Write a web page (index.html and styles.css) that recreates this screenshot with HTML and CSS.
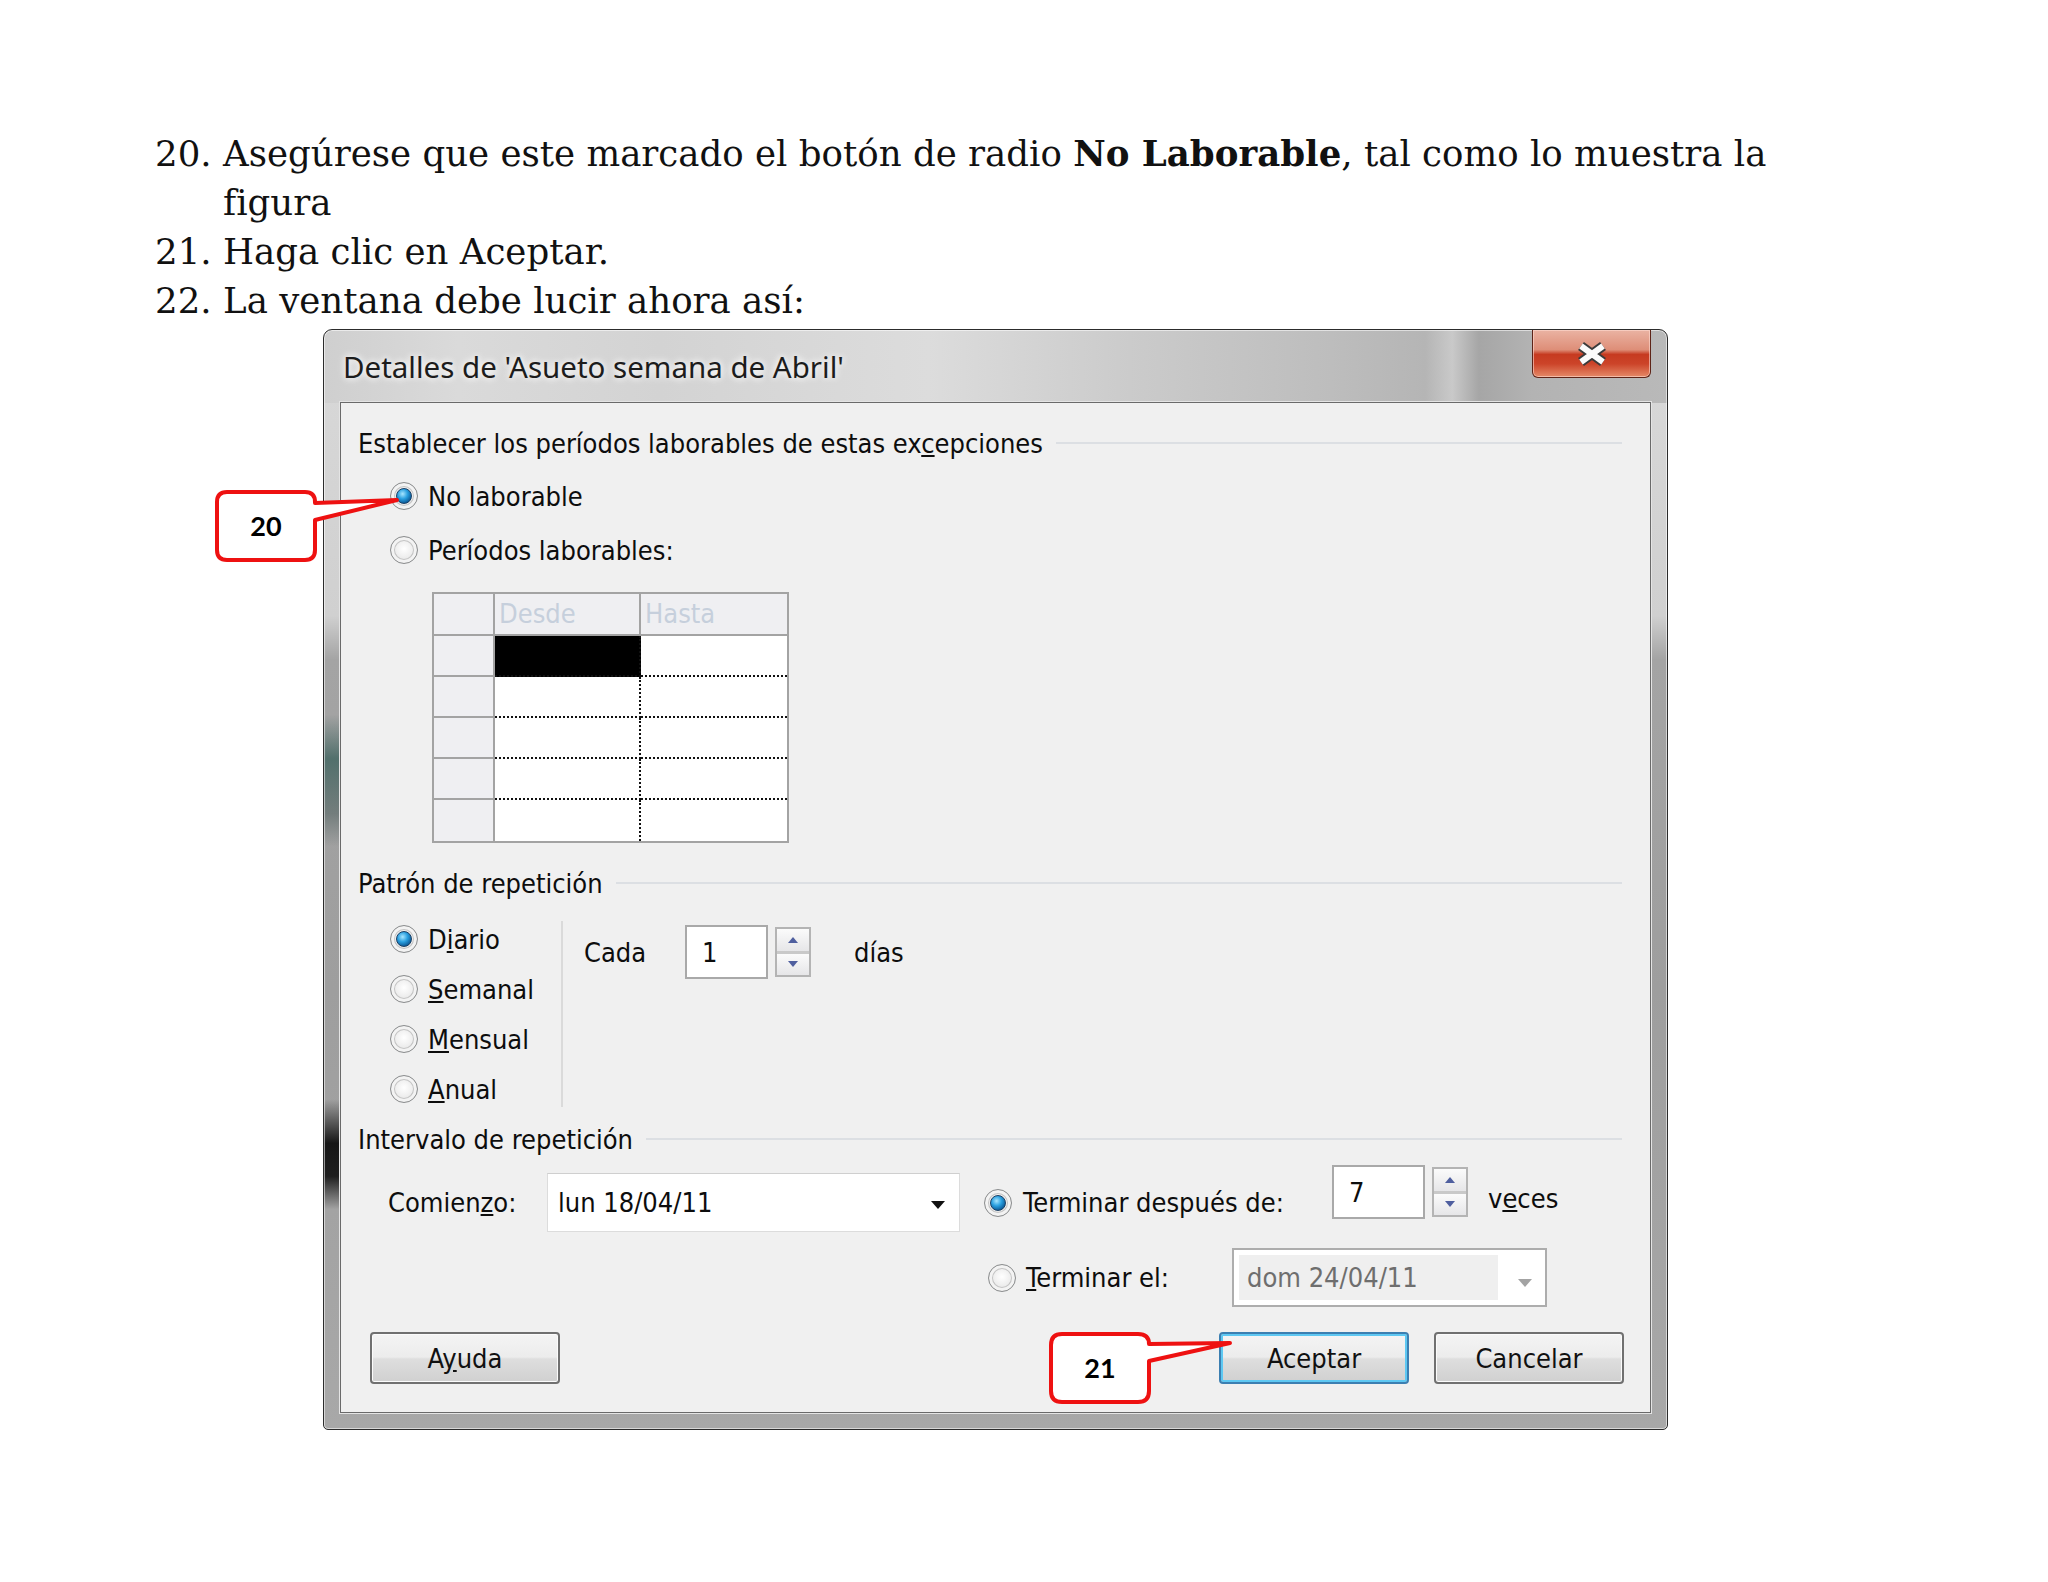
FILE: index.html
```html
<!DOCTYPE html>
<html lang="es">
<head>
    <meta charset="UTF-8">
    <title>Detalles de excepción</title>
    <link rel="stylesheet" href="styles.css">
</head>
<body>

<div class="page">
    <!-- pasos del instructivo -->
    <ol class="steps">
        <li><span class="num">20.</span><span class="txt">Asegúrese que este marcado el botón de radio <b>No Laborable</b>, tal como lo muestra la<br>figura</span></li>
        <li><span class="num">21.</span><span class="txt">Haga clic en Aceptar.</span></li>
        <li><span class="num">22.</span><span class="txt">La ventana debe lucir ahora así:</span></li>
    </ol>

    <!-- ventana de detalles -->
    <div class="window">
        <div class="titlebar">
            <span class="title">Detalles de 'Asueto semana de Abril'</span>
            <span class="close">
                <svg width="36" height="28" viewBox="-18 -14 36 28">
                    <path d="M-11 -8 L11 8 M-11 8 L11 -8" stroke="#3b3b3b" stroke-width="10" fill="none"/>
                    <path d="M-11 -8 L11 8 M-11 8 L11 -8" stroke="#fbfbfb" stroke-width="6" fill="none"/>
                </svg>
            </span>
        </div>

        <div class="client">
            <div class="group-title"><span>Establecer los períodos laborables de estas ex<u>c</u>epciones</span></div>
            <div class="radio-list">
                <label class="opt"><span class="radio on"></span><span>No laborable</span></label>
                <label class="opt"><span class="radio"></span><span>Períodos laborables:</span></label>
            </div>

            <div class="periods">
                <div class="hd corner"></div>
                <div class="hd">Desde</div>
                <div class="hd last">Hasta</div>

                <div class="rh"></div><div class="cell sel"></div><div class="cell last"></div>
                <div class="rh"></div><div class="cell"></div><div class="cell last"></div>
                <div class="rh"></div><div class="cell"></div><div class="cell last"></div>
                <div class="rh"></div><div class="cell"></div><div class="cell last"></div>
                <div class="rh end"></div><div class="cell end"></div><div class="cell last end"></div>
            </div>

            <div class="group-title pattern-title"><span>Patrón de repetición</span></div>
            <div class="pattern">
                <div class="pattern-kinds">
                    <label class="opt"><span class="radio on"></span><span>D<u>i</u>ario</span></label>
                    <label class="opt"><span class="radio"></span><span><u>S</u>emanal</span></label>
                    <label class="opt"><span class="radio"></span><span><u>M</u>ensual</span></label>
                    <label class="opt"><span class="radio"></span><span><u>A</u>nual</span></label>
                </div>
                <div class="pattern-detail">
                    <span class="lbl-cada">Cada</span>
                    <span class="spin-box">1</span>
                    <span class="spin-btns"><i class="up"></i><i class="down"></i></span>
                    <span class="lbl-dias">días</span>
                </div>
            </div>

            <div class="group-title range-title"><span>Intervalo de repetición</span></div>
            <div class="range">
                <div class="range-row">
                    <span class="lbl-start">Comien<u>z</u>o:</span>
                    <span class="combo">lun 18/04/11<i class="caret"></i></span>
                    <label class="opt end-after"><span class="radio on"></span><span class="lbl-after">Terminar después de:</span></label>
                    <span class="spin">
                        <span class="spin-box wide">7</span>
                        <span class="spin-btns"><i class="up"></i><i class="down"></i></span>
                    </span>
                    <span class="lbl-veces">v<u>e</u>ces</span>
                </div>
                <div class="range-row second">
                    <label class="opt"><span class="radio"></span><span class="lbl-on"><u>T</u>erminar el:</span></label>
                    <span class="combo disabled"><span class="combo-text">dom 24/04/11</span><i class="caret"></i></span>
                </div>
            </div>

            <div class="actions">
                <button class="btn">A<u>y</u>uda</button>
                <div class="actions-right">
                    <button class="btn default">Aceptar</button>
                    <button class="btn">Cancelar</button>
                </div>
            </div>
        </div>
    </div>

    <!-- globos numerados -->
    <svg class="callouts" width="2048" height="1582">
        <path class="balloon" d="M227 492 H305 Q315 492 315 502 V503 L397 500 L315 520 V550 Q315 560 305 560 H227 Q217 560 217 550 V502 Q217 492 227 492 Z"/>
        <text x="266" y="536" class="balloon-num">20</text>
        <path class="balloon" d="M1062 1334 H1138 Q1149 1334 1149 1344 L1230 1343 L1149 1361 V1391 Q1149 1402 1138 1402 H1062 Q1051 1402 1051 1391 V1345 Q1051 1334 1062 1334 Z"/>
        <text x="1100" y="1378" class="balloon-num">21</text>
    </svg>
</div>

</body>
</html>
```

FILE: styles.css
```css
/* ===== Hoja ===== */
body {
    margin: 0;
    background: #ffffff;
}

.page {
    position: relative;
    width: 2048px;
    height: 1582px;
    padding: 129px 0 0 155px;
    box-sizing: border-box;
}

/* ===== Pasos numerados ===== */
.steps {
    list-style: none;
    margin: 0;
    padding: 0;
    font-family: "DejaVu Serif", serif;
    font-size: 35.6px;
    line-height: 49px;
    color: #111;
}

.steps li {
    display: flex;
}

.num {
    flex: none;
    width: 68px;
}

.txt {
    width: 1585px;
}

/* ===== Marco de la ventana ===== */
.window {
    margin: 4px 0 0 168px;
    width: 1345px;
    height: 1101px;
    box-sizing: border-box;
    border: 1px solid #2c2c2c;
    border-radius: 9px 9px 5px 5px;
    padding: 0 16px 16px;
    display: flex;
    flex-direction: column;
    box-shadow: inset 0 0 0 1px rgba(255, 255, 255, 0.55);
    background:
        linear-gradient(90deg, #cfcfcf 0%, #dadada 10%, #d3d3d3 25%, #dcdcdc 45%, #cbcbcb 60%, #bdbdbd 75%, #b5b5b5 82%, #c9c9c9 84%, #a6a6a6 86%, #b3b3b3 90%, #b9b9b9 100%) left top / 100% 73px no-repeat,
        linear-gradient(180deg, transparent 0, transparent 35%, rgba(55, 95, 90, 0.75) 39%, rgba(70, 90, 88, 0.5) 44%, transparent 47%, transparent 70%, #161616 74%, #1e1e1e 77%, transparent 80%) left top / 17px 100% no-repeat,
        linear-gradient(180deg, #d9d9d9 0, #d0d0d0 26%, #a4a4a4 30%, #9e9e9e 60%, #a8a8a8 100%);
}

.titlebar {
    height: 72px;
    flex: none;
    display: flex;
    align-items: center;
    justify-content: space-between;
}

.title {
    padding-left: 3px;
    font-family: "Noto Sans", sans-serif;
    font-size: 29.5px;
    color: #1c1c1c;
    text-shadow: 0 0 6px #ffffff, 0 0 10px rgba(255, 255, 255, 0.8);
}

.close {
    align-self: flex-start;
    width: 119px;
    height: 48px;
    box-sizing: border-box;
    border: 1px solid #5e2418;
    border-top: none;
    border-radius: 0 0 6px 6px;
    display: flex;
    align-items: center;
    justify-content: center;
    background: linear-gradient(180deg, #eab3a3 0%, #de8e78 42%, #c63a20 52%, #cc4429 72%, #e58a68 100%);
    box-shadow: inset 0 0 0 1px rgba(255, 220, 210, 0.6);
}

/* ===== Area de contenido ===== */
.client {
    flex: 1;
    background: #f0f0f0;
    border: 1px solid #6a6a6a;
    box-shadow: 0 0 0 1px #e4e4e4;
    padding: 25px 28px 0 17px;
    font-family: "DejaVu Sans Condensed", "DejaVu Sans", sans-serif;
    font-size: 27px;
    color: #0d0d0d;
}

.group-title {
    display: flex;
    align-items: center;
    height: 30px;
    gap: 13px;
    white-space: nowrap;
}

.group-title::after {
    content: "";
    flex: 1;
    height: 2px;
    background: #dcdfe3;
}

.pattern-title {
    margin-top: 25px;
}

.range-title {
    margin-top: 17px;
}

.opt {
    display: flex;
    align-items: center;
    height: 36px;
    gap: 10px;
    white-space: nowrap;
}

/* boton de radio estilo Windows 7 */
.radio {
    flex: none;
    position: relative;
    width: 28px;
    height: 28px;
    box-sizing: border-box;
    border-radius: 50%;
    border: 1px solid #8b8d8e;
    background: radial-gradient(circle at 50% 45%, #ffffff 0, #eeeeee 45%, #cfcfcf 100%);
    box-shadow: inset 0 0 0 3px #f3f3f3, inset 0 0 0 4px #c4c4c4;
}

.radio.on::after {
    content: "";
    position: absolute;
    left: 5px;
    top: 5px;
    width: 16px;
    height: 16px;
    box-sizing: border-box;
    border-radius: 50%;
    border: 1px solid #1b3f63;
    background: radial-gradient(circle at 40% 35%, #a8e6ff 0, #2aa0e0 40%, #0d5c99 75%, #0a3e6c 100%);
}

.radio-list {
    margin-top: 20px;
    padding-left: 32px;
    display: flex;
    flex-direction: column;
    gap: 18px;
}

/* ===== Tabla de periodos ===== */
.periods {
    margin: 24px 0 0 74px;
    display: grid;
    grid-template-columns: 61px 146px 146px;
    grid-template-rows: 42px repeat(5, 41px);
    width: max-content;
    border: 2px solid #a3a3a3;
    background: #ffffff;
}

.periods > div {
    box-sizing: border-box;
}

.hd {
    background: #efeff2;
    border-right: 2px solid #a3a3a3;
    border-bottom: 2px solid #a3a3a3;
    color: #c6cfdc;
    padding-left: 4px;
    line-height: 40px;
}

.rh {
    background: #efeff2;
    border-right: 2px solid #a3a3a3;
    border-bottom: 2px solid #a3a3a3;
}

.cell {
    border-right: 2px dotted #111;
    border-bottom: 2px dotted #111;
}

.periods .last {
    border-right: none;
}

.periods .end {
    border-bottom: none;
}

.cell.sel {
    background: #000000;
}

/* ===== Patron de repeticion ===== */
.pattern {
    margin-top: 23px;
    height: 186px;
    display: flex;
}

.pattern-kinds {
    width: 205px;
    box-sizing: border-box;
    padding-left: 32px;
    border-right: 2px solid #dadada;
    display: flex;
    flex-direction: column;
    gap: 14px;
}

.pattern-detail {
    margin-top: 4px;
    padding-left: 21px;
    height: 54px;
    display: flex;
    align-items: center;
}

.lbl-cada {
    width: 101px;
}

.spin-box {
    width: 83px;
    height: 54px;
    box-sizing: border-box;
    border: 2px solid #a9a9a9;
    background: #ffffff;
    padding-left: 15px;
    display: flex;
    align-items: center;
}

.spin-box.wide {
    width: 93px;
}

.spin-btns {
    margin-left: 7px;
    width: 36px;
    height: 50px;
    box-sizing: border-box;
    border: 2px solid #b4b4b4;
    display: flex;
    flex-direction: column;
    gap: 3px;
    background: #c9c9c9;
}

.spin-btns i {
    flex: 1;
    position: relative;
    background: linear-gradient(180deg, #fbfbfb, #e6e6e8);
}

.spin-btns i::after {
    content: "";
    position: absolute;
    left: 50%;
    top: 50%;
    margin: -3px 0 0 -5px;
    border-left: 5px solid transparent;
    border-right: 5px solid transparent;
}

.spin-btns .up::after {
    border-bottom: 6px solid #4f5f9f;
}

.spin-btns .down::after {
    border-top: 6px solid #4f5f9f;
}

.lbl-dias {
    margin-left: 43px;
}

/* ===== Intervalo de repeticion ===== */
.range {
    margin-top: 19px;
}

.range-row {
    display: flex;
    align-items: center;
    height: 59px;
}

.range-row.second {
    margin-top: 16px;
    padding-left: 630px;
}

.lbl-start {
    margin-left: 30px;
    width: 159px;
}

.combo {
    position: relative;
    width: 413px;
    height: 59px;
    box-sizing: border-box;
    border: 1px solid #dcdcdc;
    border-top-color: #cfcfcf;
    background: #ffffff;
    padding-left: 10px;
    display: flex;
    align-items: center;
}

.caret {
    position: absolute;
    right: 14px;
    top: 27px;
    border-left: 7px solid transparent;
    border-right: 7px solid transparent;
    border-top: 8px solid #111;
}

.combo.disabled {
    width: 315px;
    border: 2px solid #adadad;
    padding: 5px;
}

.combo-text {
    width: 259px;
    height: 100%;
    box-sizing: border-box;
    padding-left: 8px;
    display: flex;
    align-items: center;
    background: #efefef;
    color: #6e6e6e;
}

.combo.disabled .caret {
    right: 13px;
    top: 29px;
    border-top-color: #a3a3a3;
}

.end-after {
    margin-left: 24px;
    gap: 11px;
}

.lbl-after {
    width: 309px;
}

.spin {
    align-self: flex-start;
    margin-top: -8px;
    display: flex;
    align-items: center;
}

.lbl-veces {
    margin-left: 20px;
    margin-top: -8px;
}

.lbl-on {
    width: 206px;
}

/* ===== Botones ===== */
.actions {
    margin-top: 25px;
    padding-left: 12px;
    display: flex;
    justify-content: space-between;
}

.actions-right {
    display: flex;
    gap: 25px;
    margin-right: -2px;
}

.btn {
    width: 190px;
    height: 52px;
    border: 2px solid #707070;
    border-radius: 4px;
    font: inherit;
    color: #111;
    background: linear-gradient(180deg, #f4f4f4 0%, #ececec 48%, #dedede 52%, #d0d0d0 100%);
    box-shadow: inset 0 0 0 1px #fbfbfb;
    padding: 0;
}

.btn.default {
    border-color: #3c7fb1;
    box-shadow: inset 0 0 0 2px #5ec8f2;
}

/* ===== Globos ===== */
.callouts {
    position: absolute;
    left: 0;
    top: 0;
    pointer-events: none;
}

.balloon {
    fill: #ffffff;
    stroke: #ee1111;
    stroke-width: 4;
    stroke-linejoin: round;
}

.balloon-num {
    font-family: "Lato", "Liberation Sans", sans-serif;
    font-weight: bold;
    font-size: 27px;
    text-anchor: middle;
    fill: #000;
}
```
